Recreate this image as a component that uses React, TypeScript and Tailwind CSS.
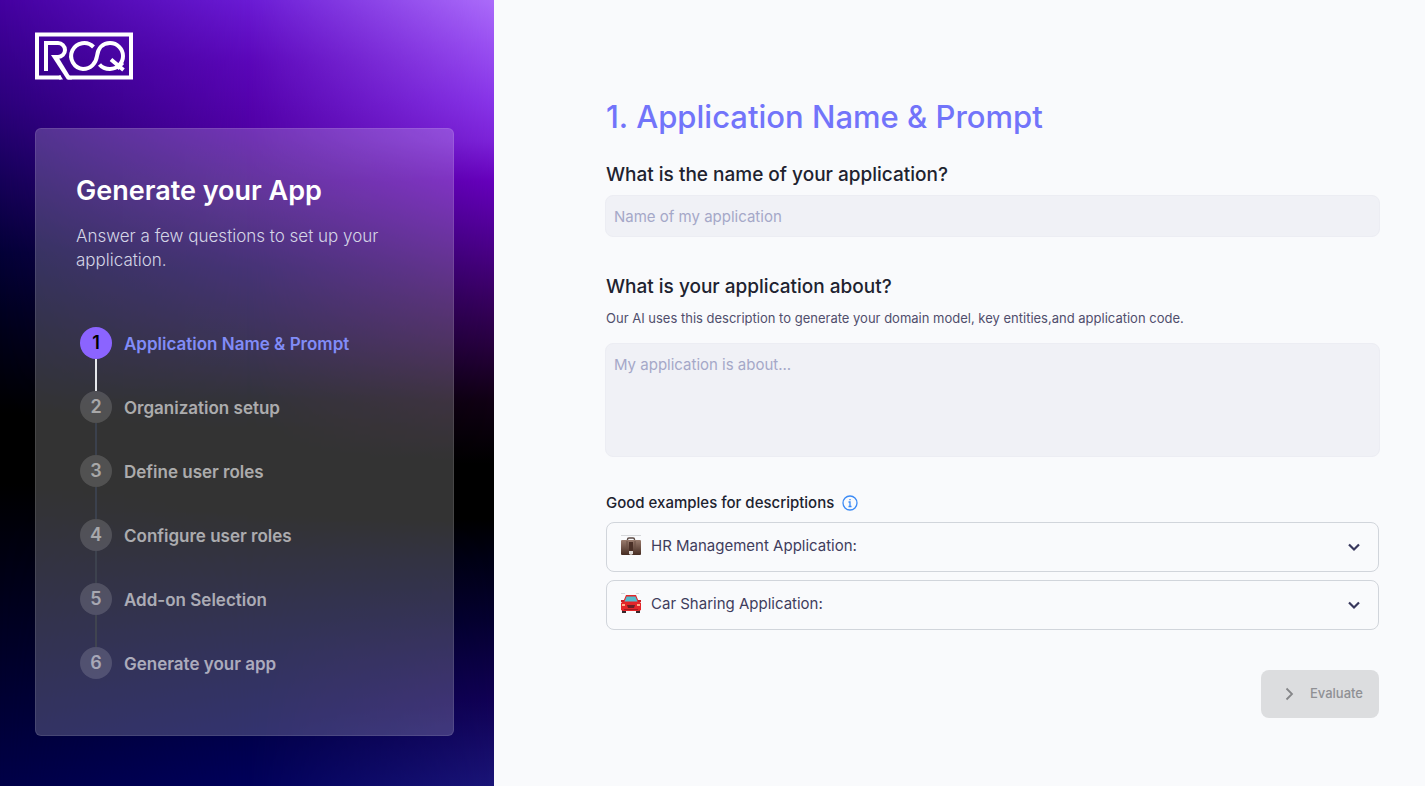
import { useState } from 'react';

const steps = [
  { label: 'Application Name & Prompt', line: 'bg-[#e5e7eb]' },
  { label: 'Organization setup', line: 'bg-[#3b414d]' },
  { label: 'Define user roles', line: 'bg-[#3b414d]' },
  { label: 'Configure user roles', line: 'bg-[#3d424e]' },
  { label: 'Add-on Selection', line: 'bg-[#404450]' },
  { label: 'Generate your app', line: '' },
];

function Logo() {
  return (
    <svg width="98" height="48" viewBox="0 0 98 48" fill="none" stroke="#fff" role="img" aria-label="ROQ">
      <path d="M26 45.500H2V2.500H96V45.500H33" strokeWidth="4" />
      <path d="M11 39V11H23A6.500 6.500 0 0 1 23 25H20" strokeWidth="4" />
      <path d="M16 23H22L37 47.500H32Z" fill="#fff" stroke="none" />
      <path d="M24 43.500H25.500L28 47.500H24Z" fill="#fff" stroke="none" />
      <path d="M58.500 15A13 13 0 1 0 48 37C56 37 61 31 62 24C63 16 68 11 75 11A13 13 0 0 1 75 37C70.500 37 67 35.500 64.500 32.500M76 27.500L88.500 38" strokeWidth="4" />
      <path d="M88 31L82.500 37" strokeWidth="3" />
    </svg>
  );
}

function Briefcase() {
  return (
    <svg width="20" height="22" viewBox="0 0 20 22" aria-hidden="true">
      <defs>
        <linearGradient id="leather" x1="0" y1="0" x2="0" y2="1">
          <stop offset="0" stopColor="#9a7c6e" />
          <stop offset="1" stopColor="#452b21" />
        </linearGradient>
      </defs>
      <path d="M0 .5H20" stroke="#d5d7da" />
      <path d="M6.500 6V4.500Q6.500 3 8 3H12Q13.500 3 13.500 4.500V6" fill="none" stroke="#5c4b45" strokeWidth="1.400" />
      <path d="M1 5H19Q20 5 20 6V19Q20 20 19 20H1Q0 20 0 19V6Q0 5 1 5Z" fill="url(#leather)" />
      <path d="M6 6V13M14 6V13" stroke="#6b5045" />
      <rect x="8" y="7" width="4" height="9" fill="#4b3027" />
      <path d="M8 16H12V19L10 20L8 19Z" fill="#ded9d6" />
    </svg>
  );
}

function Car() {
  return (
    <svg width="20" height="22" viewBox="0 0 20 22" aria-hidden="true">
      <path d="M0 .5H4M15 .5H18" stroke="#d5d7da" />
      <path d="M1 17H5V20H1ZM15 17H19V20H15Z" fill="#38262a" />
      <path d="M5 2H15L17.500 8L20 10V17L18 18H2L0 17V10L2.500 8Z" fill="#e3262a" />
      <path d="M5.500 3.500H14.500L16.500 8.500H3.500Z" fill="#55bccd" />
      <path d="M0 7H3V9H0ZM17 7H20V9H17Z" fill="#c71f27" />
      <path d="M6 12H14L13 15H7Z" fill="#6b2027" />
      <path d="M1 11H4V13H1ZM16 11H19V13H16Z" fill="#ffad8d" />
      <path d="M3 16.500H17" stroke="#a71920" />
    </svg>
  );
}

function Example({ icon, title, text }: { icon: React.ReactNode; title: string; text: string }) {
  const [open, setOpen] = useState(false);
  return (
    <div className="rounded-lg border border-[#d1d5db]">
      <button
        type="button"
        aria-expanded={open}
        onClick={() => setOpen(!open)}
        className="flex h-12 w-full items-center pl-3.5 pr-4 text-left text-[15px] text-[#3f3d5c]"
      >
        <span className="mb-0.5 flex flex-1 items-center gap-2.5">
          {icon}
          {title}
        </span>
        <svg width="16" height="16" viewBox="0 0 16 16" fill="none" stroke="#37375c" strokeWidth="2.200" aria-hidden="true">
          <path d="M3 5.500L8 10.500L13 5.500" />
        </svg>
      </button>
      {open && <p className="px-4 pb-4 text-sm text-[#3f3d5c]">{text}</p>}
    </div>
  );
}

export default function App() {
  return (
    <div className="flex min-h-screen bg-[#f9fafc] font-['Inter',sans-serif]">
      <aside className="relative isolate w-[494px] shrink-0 bg-[linear-gradient(to_bottom,#4400a0_0%,#2c007c_13%,#1a0060_21%,#040038_32%,#00001a_42%,#000000_53%,#000000_61%,#000014_72%,#000028_83%,#000048_100%)] pl-[35px] pr-10 pt-8 pb-[50px]">
        <div className="absolute inset-0 -z-10 bg-[linear-gradient(to_bottom,#6a1ad4_0%,#5a06b8_8%,#5000a6_16%,#38047c_25%,#180054_34%,#0c0230_43%,#000008_51%,#000000_55%,#000000_65%,#000012_71%,#000033_83%,#00005a_100%)] [mask-image:linear-gradient(to_right,transparent,black_50%)]" />
        <div className="absolute inset-0 -z-10 bg-[linear-gradient(to_bottom,#ab6cfa_0%,#9a50f2_6%,#8834e8_13%,#7c22d8_18%,#6600bc_23%,#520098_29%,#380060_38%,#240038_45%,#100014_51%,#000000_59%,#000000_66%,#000014_71%,#040030_79%,#100054_89%,#1a1478_100%)] [mask-image:linear-gradient(to_right,transparent_50%,black)]" />
        <Logo />
        <div className="mt-12 rounded-md border border-white/10 bg-[#ffffff33] px-10 pt-11 pb-[54px]">
          <h1 className="text-[27px] font-semibold leading-9 text-white">Generate your App</h1>
          <p className="mt-[15px] text-[17px] font-light leading-6 text-[#d4d5e6]">Answer a few questions to set up your application.</p>
          <ol className="ml-1 mt-[55px]">
            {steps.map((step, i) => (
              <li key={step.label} className="flex gap-3">
                <div className="flex flex-col items-center">
                  <span className={i === 0 ? 'flex size-8 items-center justify-center rounded-full bg-[#8b64ff] text-lg font-semibold text-black' : 'flex size-8 items-center justify-center rounded-full bg-white/15 text-lg font-semibold text-white/50'}>
                    {i + 1}
                  </span>
                  {step.line && <span className={`h-8 w-0.5 ${step.line}`} />}
                </div>
                <span className={i === 0 ? 'text-[17px] font-semibold leading-[34px] text-[#818cf8]' : 'text-[17px] font-semibold leading-[34px] text-white/60'}>{step.label}</span>
              </li>
            ))}
          </ol>
        </div>
      </aside>

      <main className="min-w-0 flex-1 pl-28 pr-[46px] pt-[97px]">
        <form onSubmit={(e) => e.preventDefault()}>
          <h2 className="text-[31px] font-medium leading-10 text-[#7274fa]">1. Application Name &amp; Prompt</h2>
          <label htmlFor="app-name" className="mt-6 block text-[19px] font-medium leading-7 text-[#20222f]">What is the name of your application?</label>
          <div className="-mx-px mt-1.5">
            <input id="app-name" placeholder="Name of my application" className="block h-[42px] w-full rounded-lg border border-[#ecedf3] bg-[#f0f1f6] px-2 text-[15px] text-[#3f3d5c] outline-none placeholder:text-[#a5a8c8]" />
          </div>
          <label htmlFor="app-about" className="mt-9 block text-[19px] font-medium leading-7 text-[#20222f]">What is your application about?</label>
          <p className="mt-[7px] text-[13px] leading-5 text-[#504e6c]">Our AI uses this description to generate your domain model, key entities,and application code.</p>
          <div className="-mx-px mt-[15px]">
            <textarea id="app-about" placeholder="My application is about..." className="block h-[114px] w-full resize-none rounded-lg border border-[#ecedf3] bg-[#f0f1f6] px-2 py-[9px] text-[15px] leading-6 text-[#3f3d5c] outline-none placeholder:text-[#a5a8c8]" />
          </div>
          <div className="mt-[34px] flex items-center gap-2">
            <h3 className="text-[15px] font-medium leading-6 text-[#20222f]">Good examples for descriptions</h3>
            <svg width="16" height="16" viewBox="0 0 16 16" fill="none" stroke="#3b8af5" strokeWidth="1.300" aria-hidden="true">
              <circle cx="8" cy="8" r="7" />
              <path d="M6.500 7H8V11.500M6.500 11.500H9.500M8 4V5.300" />
            </svg>
          </div>
          <div className="mt-[7px] flex flex-col gap-2">
            <Example icon={<Briefcase />} title="HR Management Application:" text="Manage employees, their contracts and their time off." />
            <Example icon={<Car />} title="Car Sharing Application:" text="Let drivers share their cars with people nearby." />
          </div>
          <div className="mt-10 flex justify-end">
            <button type="submit" disabled className="flex h-12 items-center gap-[13px] rounded-lg bg-[#dcdddf] pl-5 pr-4 text-[13px] font-medium text-[#8f9094]">
              <svg width="16" height="16" viewBox="0 0 16 16" fill="none" stroke="#858689" strokeWidth="1.800" aria-hidden="true">
                <path d="M5.500 2.500L11 8L5.500 13.500" />
              </svg>
              Evaluate
            </button>
          </div>
        </form>
      </main>
    </div>
  );
}
